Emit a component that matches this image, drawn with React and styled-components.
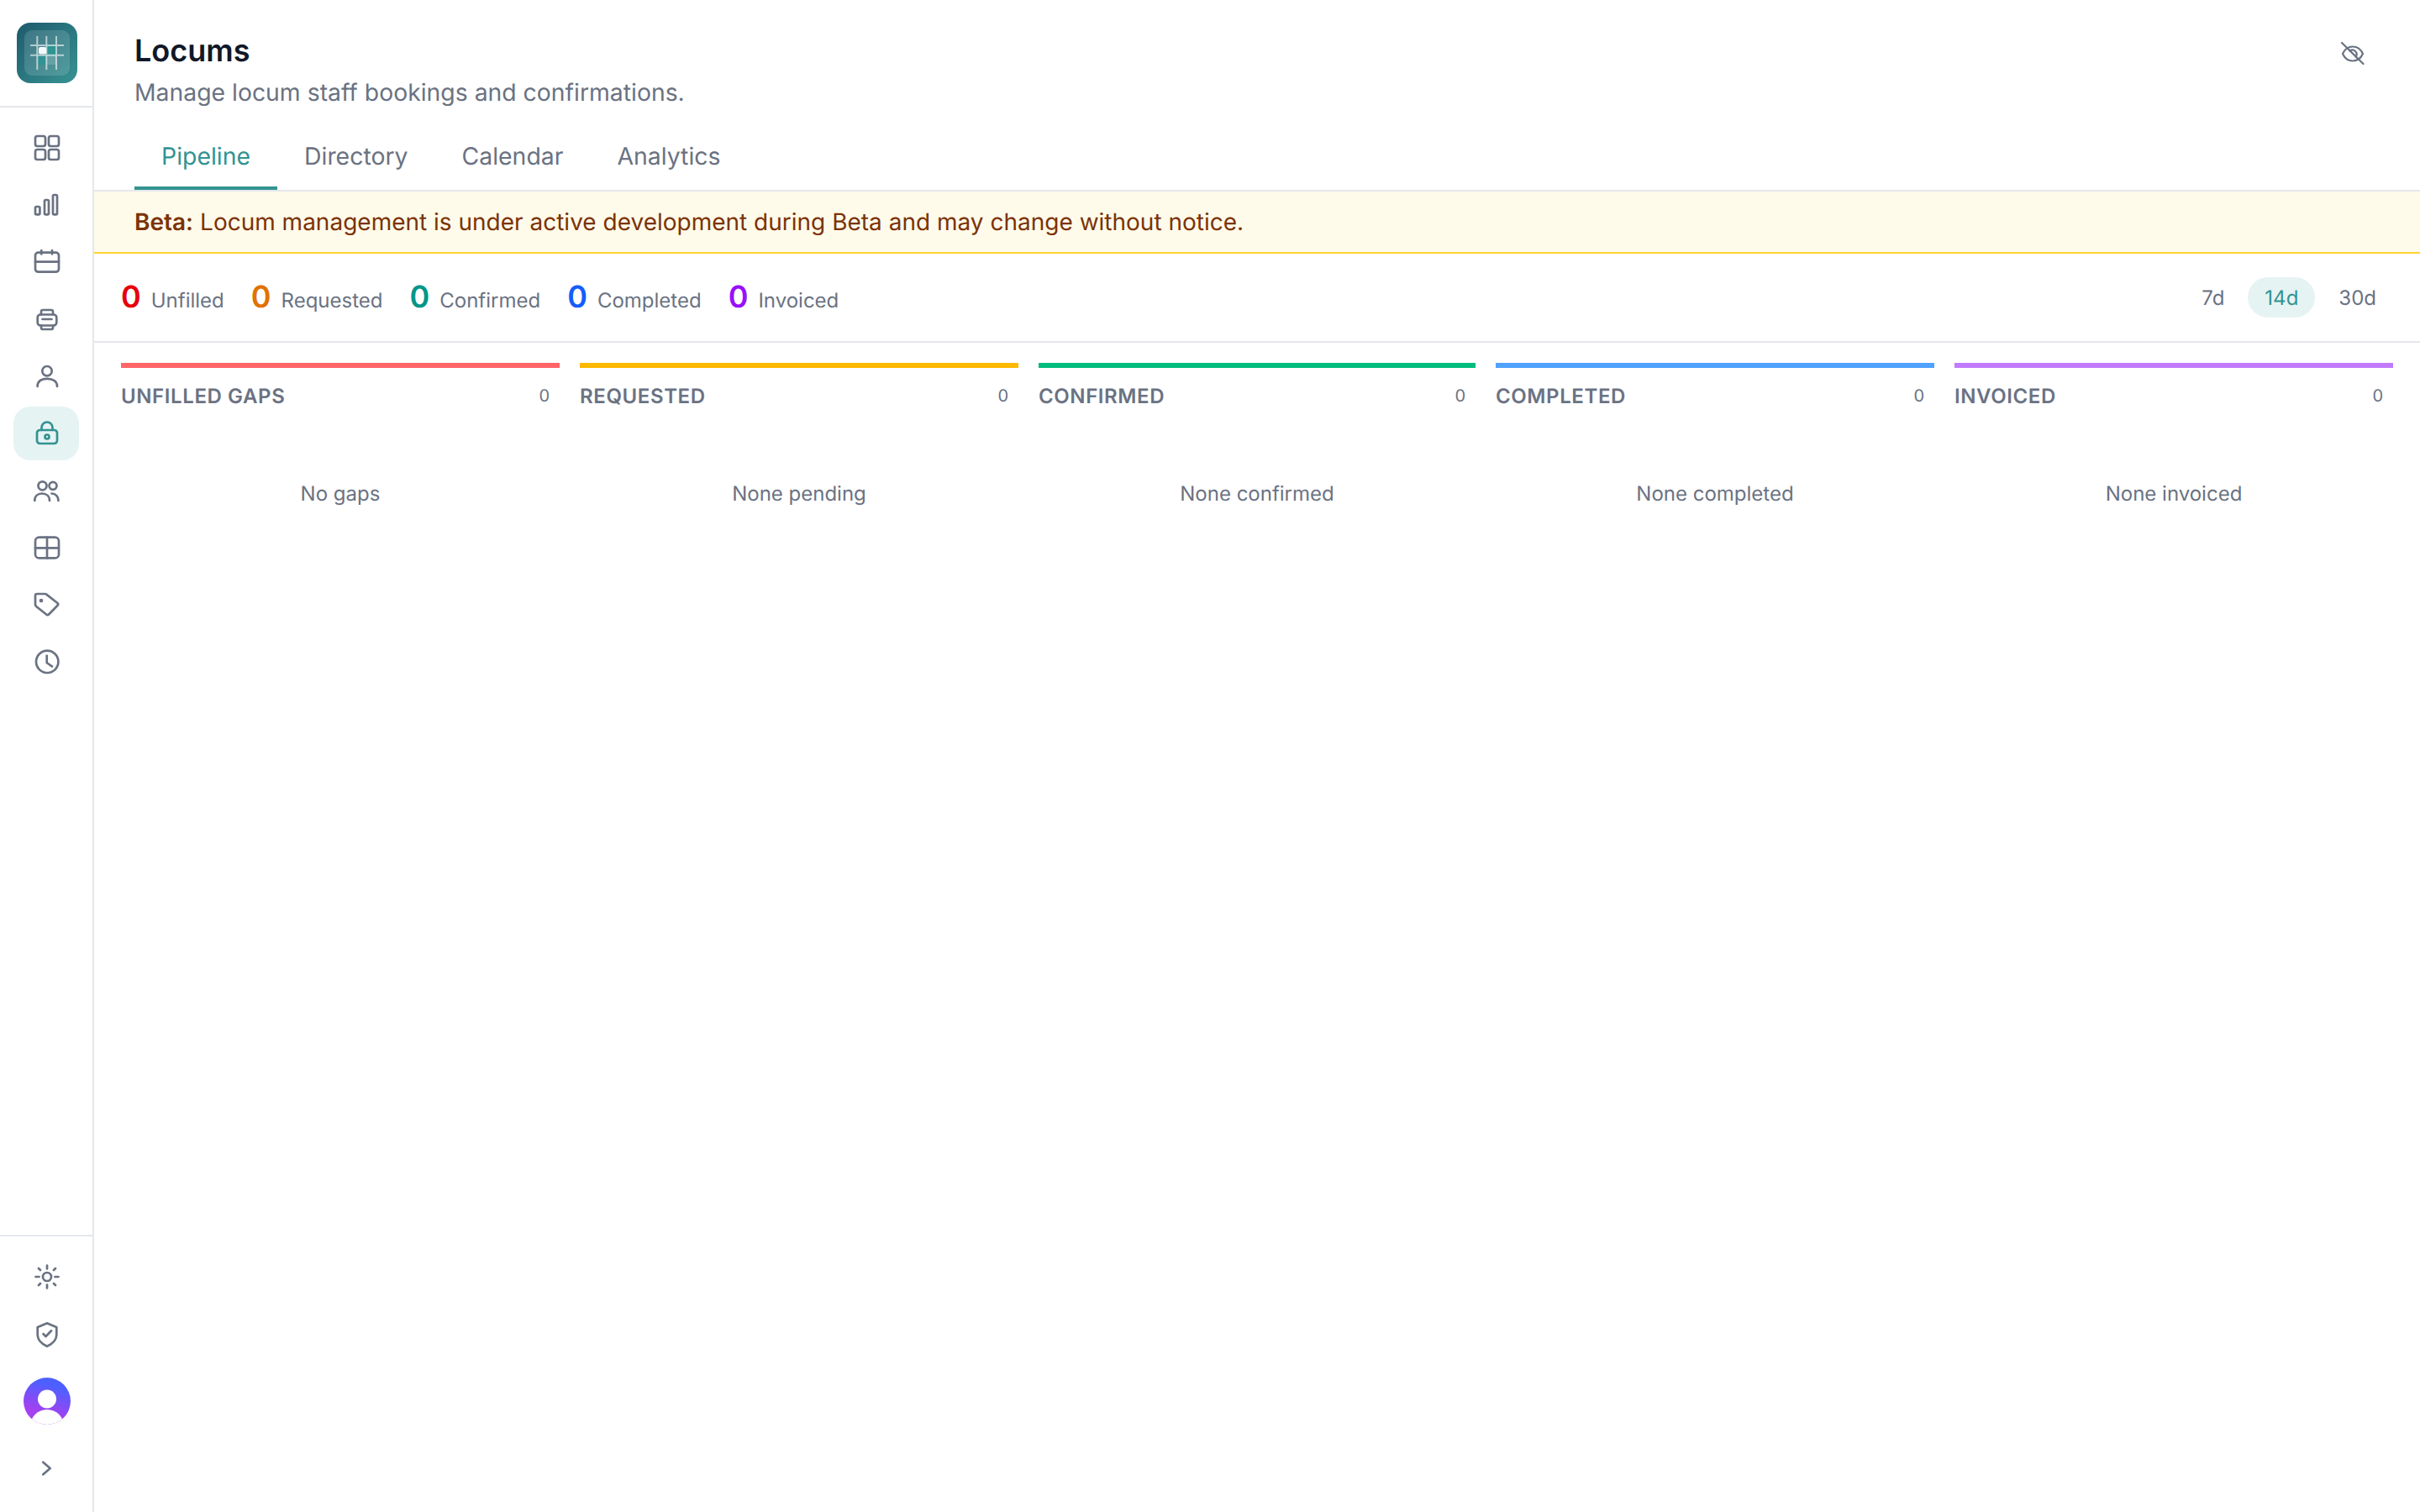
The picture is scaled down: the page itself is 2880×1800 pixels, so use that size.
import React from 'react';
import styled, { createGlobalStyle } from 'styled-components';

const TEAL = '#339391';

const Global = createGlobalStyle`
  html, body { margin: 0; padding: 0; background: #fff; }
  body { font-family: Inter, "Noto Sans", sans-serif; text-rendering: geometricPrecision; }
  * { box-sizing: border-box; }
`;

const Shell = styled.div`display: flex; width: 2880px; height: 1800px; overflow: hidden; background: #fff;`;
const Sidebar = styled.aside`width: 112px; flex: none; display: flex; flex-direction: column; border-right: 2px solid #e5e7eb; background: #fff;`;
const Brand = styled.div`height: 128px; padding-left: 2px; display: flex; align-items: center; justify-content: center; border-bottom: 2px solid #e5e7eb;`;
const Logo = styled.svg`width: 72px; height: 72px; display: block;`;
const Nav = styled.nav`display: flex; flex-direction: column; gap: 4px; padding: 16px;`;
const NavItem = styled.div`
  height: 64px; padding-left: 2px; border-radius: 20px; display: flex; align-items: center; justify-content: center;
  color: ${p => (p.$active ? TEAL : '#6a7282')};
  background: ${p => (p.$active ? '#e6f3f3' : 'transparent')};
`;
const Footer = styled(Nav)`margin-top: auto; border-top: 2px solid #e5e7eb; padding-bottom: 20px;`;
const AvatarSlot = styled.div`height: 88px; padding-left: 2px; display: flex; align-items: center; justify-content: center;`;
const Icon = styled.svg`width: 36px; height: 36px; display: block; fill: none; stroke: currentColor; stroke-width: 2.7; stroke-linecap: round; stroke-linejoin: round;`;

const Main = styled.main`flex: 1; min-width: 0; display: flex; flex-direction: column;`;
const Header = styled.header`position: relative; padding: 0 48px; height: 228px; border-bottom: 2px solid #e5e7eb;`;
const Title = styled.h1`margin: 0; padding-top: 38px; font-size: 36px; line-height: 44px; font-weight: 600; color: #101828;`;
const Subtitle = styled.p`margin: 8px 0 0; font-size: 28.35px; line-height: 40px; color: #6a7282;`;
const Tabs = styled.div`display: flex; margin-top: 36px;`;
const Tab = styled.div`
  padding: 0 32px 16px; line-height: 40px; font-size: 28.4px;
  color: ${p => (p.$active ? TEAL : '#6a7282')};
  border-bottom: 4px solid ${p => (p.$active ? TEAL : 'transparent')};
`;
const EyeButton = styled.div`position: absolute; right: 64px; top: 48px; color: #6a7282;`;
const EyeIcon = styled(Icon)`width: 32px; height: 32px; stroke-width: 2.2;`;

const Banner = styled.div`height: 74px; padding: 0 48px; display: flex; align-items: center; background: #fffbeb; border-bottom: 2px solid #ffd230; font-size: 28px; color: #7b3306;`;
const BetaLabel = styled.strong`font-weight: 600; margin-right: 8px;`;

const MetricsBar = styled.div`height: 106px; padding: 0 32px; display: flex; align-items: center; justify-content: space-between; border-bottom: 2px solid #e5e7eb;`;
const Metrics = styled.div`display: flex; gap: 32px; align-items: baseline; padding-bottom: 2px;`;
const Metric = styled.div`display: flex; gap: 12px; align-items: baseline;`;
const MetricValue = styled.span`font-size: 36px; font-weight: 600; color: ${p => p.$color};`;
const MetricLabel = styled.span`font-size: 24px; color: #6a7282;`;
const Ranges = styled.div`display: flex; gap: 8px;`;
const Range = styled.div`
  height: 48px; padding: 0 20px; border-radius: 24px; display: flex; align-items: center; font-size: 24px;
  color: ${p => (p.$active ? TEAL : '#6a7282')};
  background: ${p => (p.$active ? '#e6f3f3' : 'transparent')};
`;

const Board = styled.div`display: grid; grid-template-columns: 522px 522px 520px 522px 522px; gap: 24px; padding: 24px 32px;`;
const Column = styled.section`display: flex; flex-direction: column; border-top: 6px solid ${p => p.$color};`;
const ColumnHead = styled.div`display: flex; justify-content: space-between; align-items: center; height: 44px; margin-top: 11px; padding-right: 12px;`;
const ColumnTitle = styled.h2`margin: 0; font-size: 24px; font-weight: 600; letter-spacing: 0.6px; text-transform: uppercase; color: #6a7282;`;
const ColumnCount = styled.span`font-size: 20px; color: #6a7282;`;
const Empty = styled.div`margin-top: 77px; text-align: center; font-size: 24px; line-height: 36px; color: #6a7282;`;

const metrics = [
  ['Unfilled', '#e7000b'], ['Requested', '#e17100'], ['Confirmed', '#009689'], ['Completed', '#155dfc'], ['Invoiced', '#9810fa'],
];
const columns = [
  ['Unfilled gaps', '#ff6467', 'No gaps'], ['Requested', '#ffb900', 'None pending'], ['Confirmed', '#00bc7d', 'None confirmed'],
  ['Completed', '#51a2ff', 'None completed'], ['Invoiced', '#c27aff', 'None invoiced'],
];

const icons = {
  grid: <><rect x="4" y="4" width="12" height="12" rx="2.5"/><rect x="20" y="4" width="12" height="12" rx="2.5"/><rect x="4" y="20" width="12" height="12" rx="2.5"/><rect x="20" y="20" width="12" height="12" rx="2.500"/></>,
  bars: <><rect x="4" y="20" width="5.400" height="9.400" rx="1.500"/><rect x="15" y="12" width="5" height="17.400" rx="1.500"/><rect x="25" y="6" width="5" height="23.400" rx="1.500"/></>,
  calendar: <><rect x="4" y="6.700" width="28" height="23" rx="3.500"/><path d="M4 17.700h28M11.300 4v4.500M24 4v4.500"/></>,
  printer: <><rect x="6.700" y="12.500" width="22.600" height="13" rx="3.500"/><path d="M11 12.500V9a2 2 0 0 1 2-2h10a2 2 0 0 1 2 2v3.500M11 25.500V28a2 2 0 0 0 2 2h10a2 2 0 0 0 2-2v-2.500M12.500 18h11"/></>,
  user: <><circle cx="18" cy="11.700" r="5.700"/><path d="M6.600 30C6.600 24 11 20.800 18 20.800S30 24 30 30"/></>,
  bag: <><rect x="6" y="14" width="24" height="16" rx="3.500"/><path d="M11.500 14v-3a6.500 6.500 0 0 1 13 0v3"/><circle cx="18" cy="22" r="2.500"/></>,
  users: <><circle cx="12.500" cy="12.300" r="5"/><circle cx="25" cy="12.300" r="4.500"/><path d="M3.300 30C3.300 24.500 7 21.500 12 21.500S21 24.500 21 30M23.500 21.500C28 21.500 31.500 25 31.500 30"/></>,
  table: <><rect x="4" y="5.700" width="28" height="24.700" rx="4.500"/><path d="M4 18.300h28M18 5.700v24.700"/></>,
  tag: <><path d="M6 5H15.500a3 3 0 0 1 2.100.9L30.500 16a2 2 0 0 1 0 2.800L20 29.500a2 2 0 0 1-2.800 0L5.200 20a3 3 0 0 1-1.200-2.400V7a2 2 0 0 1 2-2z"/><circle cx="11" cy="13" r="1" fill="currentColor"/></>,
  clock: <><circle cx="18.200" cy="17.800" r="13.200"/><path d="M17.700 10.500V19L24 23.300"/></>,
  gear: <><circle cx="18" cy="18" r="5"/><path d="M18 4.500v4M18 27.500v4M4.500 18h4M27.500 18h4M8 8l2 2M26 26l2 2M8 28l2-2M26 10l2-2"/></>,
  shield: <><path d="M18 5.300L29.300 10V19C29.300 25.500 24 30 18 32.700 12 30 6.700 25.500 6.700 19V10Z"/><path d="M13.500 18l3 3L23 14.300"/></>,
  chevron: <path d="M13.300 10.700L21.700 18 13.300 25.300"/>,
};
const top = ['grid', 'bars', 'calendar', 'printer', 'user', 'bag', 'users', 'table', 'tag', 'clock'];

export default function App() {
  return (
    <Shell>
      <Global />
      <Sidebar>
        <Brand>
          <Logo viewBox="0 0 72 72">
            <defs>
              <linearGradient id="lg" x1="0" y1="0" x2="1" y2="1"><stop offset="0" stopColor="#1d5a6c"/><stop offset="1" stopColor="#389393"/></linearGradient>
            </defs>
            <rect width="72" height="72" rx="16" fill="url(#lg)"/>
            <rect x="9" y="9" width="54" height="54" rx="9" fill="#fff" fillOpacity=".14"/>
            <rect x="35.300" y="27" width="11.700" height="11.700" fill="#2e9494"/>
            <rect x="24.300" y="38.700" width="11" height="11.300" fill="#2e9494" fillOpacity=".8"/>
            <rect x="35.300" y="38.700" width="11.700" height="11.300" fill="#fff" fillOpacity=".16"/>
            <path d="M24.300 16v40M35.300 16v40M47 16v40M16 27h40M16 38.700h40" stroke="#fff" strokeOpacity=".6" strokeWidth="2"/>
            <rect x="26" y="29" width="9" height="8.500" rx="2" fill="#fff" fillOpacity=".95"/>
          </Logo>
        </Brand>
        <Nav>
          {top.map(k => <NavItem key={k} $active={k === 'bag'}><Icon viewBox="0 0 36 36">{icons[k]}</Icon></NavItem>)}
        </Nav>
        <Footer>
          <NavItem><Icon viewBox="0 0 36 36">{icons.gear}</Icon></NavItem>
          <NavItem><Icon viewBox="0 0 36 36">{icons.shield}</Icon></NavItem>
          <AvatarSlot>
            <svg width="56" height="56" viewBox="0 0 56 56">
              <defs>
                <linearGradient id="av" x1=".6" y1="0" x2=".3" y2="1"><stop offset="0.15" stopColor="#4d60ff"/><stop offset=".75" stopColor="#a53ff0"/></linearGradient>
                <clipPath id="avc"><circle cx="28" cy="28" r="28"/></clipPath>
              </defs>
              <circle cx="28" cy="28" r="28" fill="url(#av)"/>
              <g clipPath="url(#avc)" fill="#fff">
                <circle cx="28" cy="25.500" r="11"/>
                <ellipse cx="28" cy="58" rx="20" ry="20"/>
              </g>
            </svg>
          </AvatarSlot>
          <NavItem><Icon viewBox="0 0 36 36">{icons.chevron}</Icon></NavItem>
        </Footer>
      </Sidebar>
      <Main>
        <Header>
          <Title>Locums</Title>
          <Subtitle>Manage locum staff bookings and confirmations.</Subtitle>
          <Tabs>
            <Tab $active>Pipeline</Tab><Tab>Directory</Tab><Tab>Calendar</Tab><Tab>Analytics</Tab>
          </Tabs>
          <EyeButton>
            <EyeIcon viewBox="0 0 32 32">
              <path d="M4 16c2.500-5.500 7-8.500 12-8.500S25.500 10.500 28 16c-2.500 5.500-7 8.500-12 8.500S6.500 21.500 4 16z"/>
              <path d="M12.500 12.500a5 5 0 0 1 7 7"/>
              <path d="M3 3l25.500 25"/>
            </EyeIcon>
          </EyeButton>
        </Header>
        <Banner><BetaLabel>Beta:</BetaLabel> Locum management is under active development during Beta and may change without notice.</Banner>
        <MetricsBar>
          <Metrics>
            {metrics.map(([l, c]) => <Metric key={l}><MetricValue $color={c}>0</MetricValue><MetricLabel>{l}</MetricLabel></Metric>)}
          </Metrics>
          <Ranges><Range>7d</Range><Range $active>14d</Range><Range>30d</Range></Ranges>
        </MetricsBar>
        <Board>
          {columns.map(([t, c, e]) => (
            <Column key={t} $color={c}>
              <ColumnHead><ColumnTitle>{t}</ColumnTitle><ColumnCount>0</ColumnCount></ColumnHead>
              <Empty>{e}</Empty>
            </Column>
          ))}
        </Board>
      </Main>
    </Shell>
  );
}
